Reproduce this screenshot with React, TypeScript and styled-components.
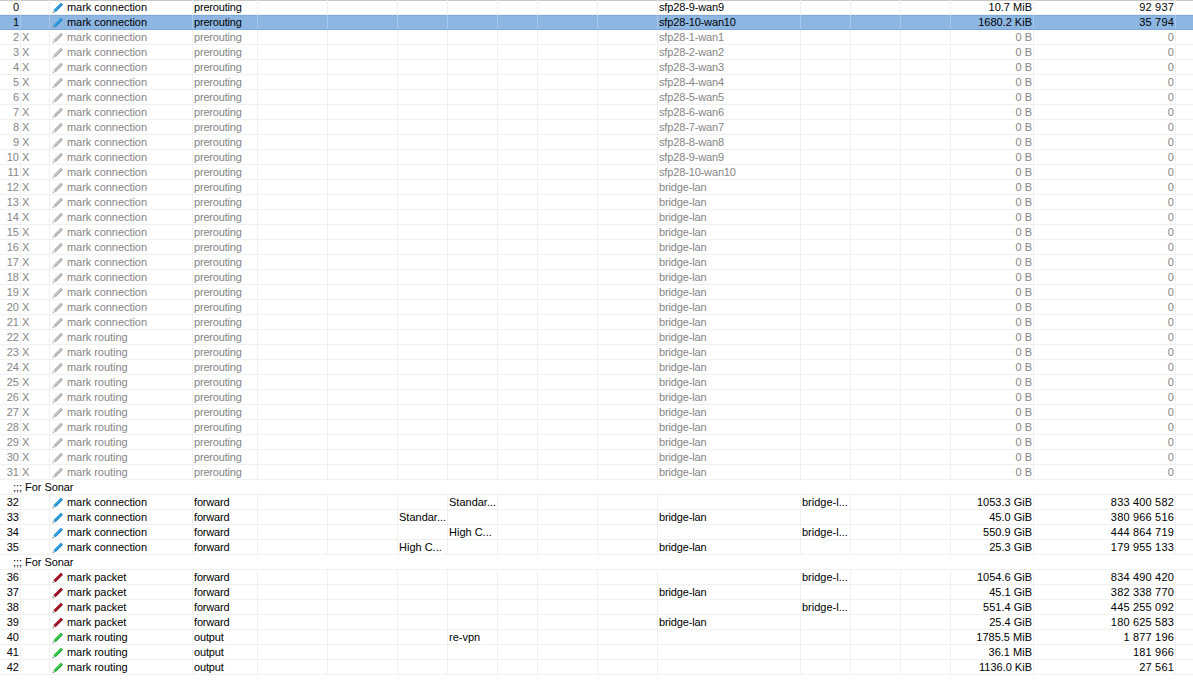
import React from "react";
import styled, { createGlobalStyle } from "styled-components";

const Global = createGlobalStyle`
  html, body { margin: 0; padding: 0; background: #fff; }
  body { font-family: "Liberation Sans", Arial, sans-serif; overflow: hidden; }
`;

const COLUMNS = "21px 29px 143px 65px 70px 70px 50px 50px 40px 60px 60px 143px 50px 50px 50px 83px 142px 17px";

const Table = styled.div`
  width: 1193px;
  height: 681px;
  display: flex;
  flex-direction: column;
  box-sizing: border-box;
  font-size: 11px;
  color: #000;
`;

const Row = styled.div<{ $selected?: boolean; $disabled?: boolean }>`
  display: grid;
  grid-template-columns: ${COLUMNS};
  height: 15px;
  flex: none;
  box-sizing: border-box;
  border-bottom: 1px solid ${(p) => (p.$selected ? "#7ea8d8" : "#f0f0f0")};
  background: ${(p) => (p.$selected ? "#8db6e3" : "#fff")};
  color: ${(p) => (p.$disabled ? "#858585" : "#000")};
  box-shadow: ${(p) => (p.$selected ? "inset 0 1px 0 #7ea8d8" : "none")};
  &:first-child { box-shadow: inset 0 1px 0 #c8c8c8; }
`;

const Cell = styled.div<{ $right?: boolean; $selected?: boolean; $track?: number }>`
  box-sizing: border-box;
  height: 14px;
  line-height: 14px;
  padding: 0 1px;
  overflow: hidden;
  white-space: nowrap;
  letter-spacing: ${(p) => p.$track ?? 0}px;
  text-align: ${(p) => (p.$right ? "right" : "left")};
  border-right: 1px solid ${(p) => (p.$selected ? "#a9c9ec" : "#f0f0f0")};
  &:last-child { border-right: none; }
`;

const ActionCell = styled(Cell)`
  display: flex;
  align-items: center;
  gap: 3px;
`;

const CommentRow = styled.div`
  height: 15px;
  flex: none;
  box-sizing: border-box;
  line-height: 14px;
  padding-left: 13px;
  letter-spacing: -0.05px;
  border-bottom: 1px solid #f0f0f0;
`;

const PENCIL = {
  blue: ["#1a7fc4", "#36a3e6"],
  red: ["#7e0c1c", "#b5172c"],
  green: ["#169c30", "#3fd04e"],
  grey: ["#aaaaaa", "#c4c4c4"],
};
type Tone = keyof typeof PENCIL;

const Pencil = ({ tone }: { tone: Tone }) => (
  <svg width="13" height="13" viewBox="0 0 13 13" style={{ flex: "none" }}>
    <path d="M1.2 12.4 L1.9 9.9 L3.8 11.6 Z" fill={tone === "grey" ? "#bbbbbb" : "#9a9a9a"} />
    <path d="M2.4 9.2 L9.9 1.7 L12 3.8 L4.5 11.3 Z" fill={PENCIL[tone][0]} />
    <path d="M2.9 9.1 L9.9 2.1 L11 3.2 L4 10.2 Z" fill={PENCIL[tone][1]} />
  </svg>
);

type R = {
  n?: number; off?: boolean; a?: string; tone?: Tone; chain?: string; src?: string; conn?: string;
  inI?: string; outI?: string; bytes?: string; pk?: string; sel?: boolean; comment?: string;
};

const rows: R[] = [];
const conn = "mark connection";
const route = "mark routing";
const pkt = "mark packet";
rows.push({ n: 0, a: conn, tone: "blue", chain: "prerouting", inI: "sfp28-9-wan9", bytes: "10.7 MiB", pk: "92 937" });
rows.push({ n: 1, a: conn, tone: "blue", chain: "prerouting", inI: "sfp28-10-wan10", bytes: "1680.2 KiB", pk: "35 794", sel: true });
for (let i = 2; i <= 31; i++) {
  const inI = i <= 11 ? (i <= 10 ? `sfp28-${i - 1}-wan${i - 1}` : "sfp28-10-wan10") : "bridge-lan";
  rows.push({ n: i, off: true, a: i <= 21 ? conn : route, tone: "grey", chain: "prerouting", inI, bytes: "0 B", pk: "0" });
}
rows.push({ comment: ";;; For Sonar" });
rows.push({ n: 32, a: conn, tone: "blue", chain: "forward", conn: "Standar...", outI: "bridge-l...", bytes: "1053.3 GiB", pk: "833 400 582" });
rows.push({ n: 33, a: conn, tone: "blue", chain: "forward", src: "Standar...", inI: "bridge-lan", bytes: "45.0 GiB", pk: "380 966 516" });
rows.push({ n: 34, a: conn, tone: "blue", chain: "forward", conn: "High C...", outI: "bridge-l...", bytes: "550.9 GiB", pk: "444 864 719" });
rows.push({ n: 35, a: conn, tone: "blue", chain: "forward", src: "High C...", inI: "bridge-lan", bytes: "25.3 GiB", pk: "179 955 133" });
rows.push({ comment: ";;; For Sonar" });
rows.push({ n: 36, a: pkt, tone: "red", chain: "forward", outI: "bridge-l...", bytes: "1054.6 GiB", pk: "834 490 420" });
rows.push({ n: 37, a: pkt, tone: "red", chain: "forward", inI: "bridge-lan", bytes: "45.1 GiB", pk: "382 338 770" });
rows.push({ n: 38, a: pkt, tone: "red", chain: "forward", outI: "bridge-l...", bytes: "551.4 GiB", pk: "445 255 092" });
rows.push({ n: 39, a: pkt, tone: "red", chain: "forward", inI: "bridge-lan", bytes: "25.4 GiB", pk: "180 625 583" });
rows.push({ n: 40, a: route, tone: "green", chain: "output", conn: "re-vpn", bytes: "1785.5 MiB", pk: "1 877 196" });
rows.push({ n: 41, a: route, tone: "green", chain: "output", bytes: "36.1 MiB", pk: "181 966" });
rows.push({ n: 42, a: route, tone: "green", chain: "output", bytes: "1136.0 KiB", pk: "27 561" });

export default function App() {
  return (
    <>
      <Global />
      <Table>
        {rows.map((r, i) => {
          if (r.comment) return <CommentRow key={i}>{r.comment}</CommentRow>;
          const s = r.sel;
          return (
            <Row key={i} $selected={s} $disabled={r.off}>
              <Cell $right $selected={s}>{r.n}</Cell>
              <Cell $selected={s}>{r.off ? "X" : ""}</Cell>
              <ActionCell $selected={s} $track={-0.05}><Pencil tone={r.tone!} />{r.a}</ActionCell>
              <Cell $selected={s} $track={-0.18}>{r.chain}</Cell>
              <Cell $selected={s} />
              <Cell $selected={s} />
              <Cell $selected={s}>{r.src}</Cell>
              <Cell $selected={s}>{r.conn}</Cell>
              <Cell $selected={s} />
              <Cell $selected={s} />
              <Cell $selected={s} />
              <Cell $selected={s} $track={-0.15}>{r.inI}</Cell>
              <Cell $selected={s}>{r.outI}</Cell>
              <Cell $selected={s} />
              <Cell $selected={s} />
              <Cell $right $selected={s}>{r.bytes}</Cell>
              <Cell $right $selected={s} $track={0.18}>{r.pk}</Cell>
              <Cell $selected={s} />
            </Row>
          );
        })}
      </Table>
    </>
  );
}
